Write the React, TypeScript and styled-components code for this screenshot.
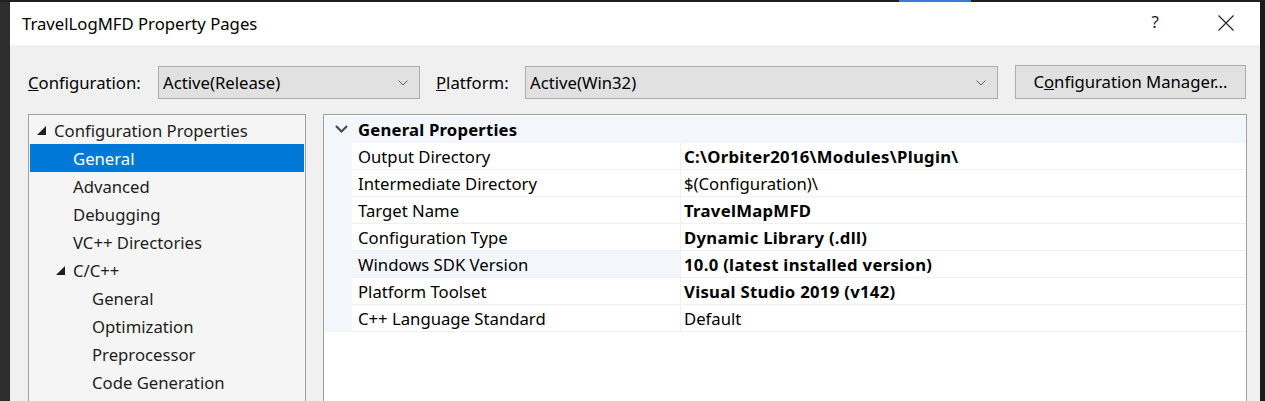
import React from 'react';
import styled, {createGlobalStyle} from "styled-components";

const GlobalStyle = createGlobalStyle`
    html, body {
        margin: 0;
        padding: 0;
        background: #1f1f1f;
        overflow: hidden;
    }
    body {
        font-family: "Segoe UI", "Noto Sans", "Open Sans", sans-serif;
        font-size: 16.7px;
        color: #000;
    }
`

type TreeItem = { label: string, level: number, expanded?: boolean, selected?: boolean }

const treeItems: TreeItem[] = [
    {label: 'Configuration Properties', level: 0, expanded: true},
    {label: 'General', level: 1, selected: true},
    {label: 'Advanced', level: 1},
    {label: 'Debugging', level: 1},
    {label: 'VC++ Directories', level: 1},
    {label: 'C/C++', level: 1, expanded: true},
    {label: 'General', level: 2},
    {label: 'Optimization', level: 2},
    {label: 'Preprocessor', level: 2},
    {label: 'Code Generation', level: 2},
]

type Prop = { name: string, value: string, bold?: boolean, hover?: boolean }

const properties: Prop[] = [
    {name: 'Output Directory', value: 'C:\\Orbiter2016\\Modules\\Plugin\\', bold: true},
    {name: 'Intermediate Directory', value: '$(Configuration)\\'},
    {name: 'Target Name', value: 'TravelMapMFD', bold: true},
    {name: 'Configuration Type', value: 'Dynamic Library (.dll)', bold: true},
    {name: 'Windows SDK Version', value: '10.0 (latest installed version)', bold: true, hover: true},
    {name: 'Platform Toolset', value: 'Visual Studio 2019 (v142)', bold: true},
    {name: 'C++ Language Standard', value: 'Default'},
]

const ComboArrow = () => (
    <svg width="10" height="6" viewBox="0 0 10 6">
        <path d="M0.5 0.5 L5 5 L9.5 0.5" fill="none" stroke="#606060" strokeWidth="1"/>
    </svg>
)

const Expander = () => (
    <svg width="9" height="9" viewBox="0 0 9 9">
        <path d="M9 0 L9 9 L0 9 Z" fill="#1e1e1e"/>
    </svg>
)

export default function App() {
    return (
        <>
            <GlobalStyle/>
            <Screen>
                <TopStrip>
                    <TaskAccent/>
                </TopStrip>
                <Row>
                    <LeftEdge/>
                    <Dialog>
                        <TitleBar>
                            <Title>TravelLogMFD Property Pages</Title>
                            <TitleButtons>
                                <HelpButton>?</HelpButton>
                                <CloseButton>
                                    <svg width="16" height="16" viewBox="0 0 16 16">
                                        <path d="M0.5 0.5 L15.5 15.5 M15.5 0.5 L0.5 15.5" stroke="#1e1e1e"
                                              strokeWidth="1.1"/>
                                    </svg>
                                </CloseButton>
                            </TitleButtons>
                        </TitleBar>
                        <Body>
                            <Toolbar>
                                <FieldLabel width={130}><u>C</u>onfiguration:</FieldLabel>
                                <Combo width={262}>
                                    <span>Active(Release)</span>
                                    <ComboArrow/>
                                </Combo>
                                <FieldLabel gap={16} width={89}><u>P</u>latform:</FieldLabel>
                                <Combo width={473}>
                                    <span>Active(Win32)</span>
                                    <ComboArrow/>
                                </Combo>
                                <ManagerButton>C<u>o</u>nfiguration Manager...</ManagerButton>
                            </Toolbar>
                            <Panels>
                                <TreePanel>
                                    {treeItems.map((item, i) => (
                                        <TreeRow key={i} selected={item.selected}>
                                            <TreeIndent level={item.level}>
                                                {item.expanded && <ExpanderBox><Expander/></ExpanderBox>}
                                            </TreeIndent>
                                            <span>{item.label}</span>
                                        </TreeRow>
                                    ))}
                                </TreePanel>
                                <GridPanel>
                                    <GroupHeader>
                                        <Chevron>
                                            <svg width="13" height="8" viewBox="0 0 13 8">
                                                <path d="M1 1 L6.5 6.5 L12 1" fill="none" stroke="#4a4a4a"
                                                      strokeWidth="2.2"/>
                                            </svg>
                                        </Chevron>
                                        <GroupTitle>General Properties</GroupTitle>
                                    </GroupHeader>
                                    {properties.map((p, i) => (
                                        <PropRow key={i}>
                                            <Gutter/>
                                            <PropName hover={p.hover}>{p.name}</PropName>
                                            <PropValue bold={p.bold}>{p.value}</PropValue>
                                        </PropRow>
                                    ))}
                                </GridPanel>
                            </Panels>
                        </Body>
                    </Dialog>
                    <RightEdge/>
                </Row>
            </Screen>
        </>
    );
}

const Screen = styled.div`
    width: 1265px;
    height: 401px;
    display: flex;
    flex-direction: column;
    overflow: hidden;
`

const TopStrip = styled.div`
    height: 2px;
    flex-shrink: 0;
    background: #1f1f1f;
    display: flex;
`

const TaskAccent = styled.div`
    margin-left: 899px;
    width: 72px;
    background: #3b78d8;
`

const Row = styled.div`
    flex: 1;
    display: flex;
    min-height: 0;
`

const LeftEdge = styled.div`
    width: 10px;
    background: #2d2d2d;
`

const RightEdge = styled.div`
    width: 5px;
    background: #1a1a1a;
`

const Dialog = styled.div`
    width: 1250px;
    display: flex;
    flex-direction: column;
    background: #f0f0f0;
`

const TitleBar = styled.div`
    height: 43px;
    flex-shrink: 0;
    background: #ffffff;
    display: flex;
    align-items: center;
    justify-content: space-between;
    padding-left: 12px;
`

const Title = styled.span`
    color: #000;
    margin-top: -1px;
`

const TitleButtons = styled.div`
    display: flex;
    align-items: center;
    height: 100%;
    margin-right: 26px;
`

const HelpButton = styled.span`
    font-size: 17px;
    color: #1e1e1e;
    margin-right: 59px;
    margin-top: -4px;
`

const CloseButton = styled.span`
    display: flex;
    margin-top: -2px;
`

const Body = styled.div`
    flex: 1;
    display: flex;
    flex-direction: column;
    padding: 19px 13px 0 18px;
`

const Toolbar = styled.div`
    display: flex;
    align-items: center;
    height: 35px;
`

const FieldLabel = styled.span<{ gap?: number, width: number }>`
    margin-left: ${p => p.gap ?? 0}px;
    width: ${p => p.width}px;
    flex-shrink: 0;
    margin-top: 2px;
    white-space: nowrap;
`

const Combo = styled.div<{ width: number }>`
    box-sizing: border-box;
    width: ${p => p.width}px;
    height: 33px;
    margin-top: 2px;
    background: #e1e1e1;
    border: 1px solid #adadad;
    display: flex;
    align-items: center;
    justify-content: space-between;
    padding: 0 11px 0 4px;
`

const ManagerButton = styled.div`
    box-sizing: border-box;
    margin-left: 17px;
    width: 231px;
    height: 34px;
    background: #e1e1e1;
    border: 1px solid #adadad;
    display: flex;
    align-items: center;
    justify-content: center;
    white-space: nowrap;
`

const Panels = styled.div`
    flex: 1;
    display: flex;
    gap: 17px;
    margin-top: 15px;
`

const TreePanel = styled.div`
    box-sizing: border-box;
    width: 278px;
    background: #f5f5f5;
    border: 1px solid #a0a0a0;
    border-bottom: none;
    padding: 1px 1px 0;
`

const TreeRow = styled.div<{ selected?: boolean }>`
    height: 28px;
    display: flex;
    align-items: center;
    background: ${p => p.selected ? '#0078d7' : 'transparent'};
    color: ${p => p.selected ? '#ffffff' : '#1e1e1e'};
    white-space: nowrap;
`

const TreeIndent = styled.div<{ level: number }>`
    width: ${p => 24 + p.level * 19}px;
    flex-shrink: 0;
    display: flex;
    justify-content: flex-end;
`

const ExpanderBox = styled.div`
    width: 17px;
    display: flex;
    align-items: center;
`

const GridPanel = styled.div`
    box-sizing: border-box;
    width: 924px;
    background: #ffffff;
    border: 1px solid #a0a0a0;
    border-bottom: none;
    padding-top: 1px;
`

const GroupHeader = styled.div`
    height: 27px;
    display: flex;
    align-items: center;
    background: #f3f6fb;
`

const Chevron = styled.div`
    width: 34px;
    display: flex;
    justify-content: center;
    margin-top: -1px;
`

const GroupTitle = styled.span`
    font-weight: bold;
    letter-spacing: 0.2px;
`

const PropRow = styled.div`
    height: 27px;
    display: flex;
`

const Gutter = styled.div`
    width: 28px;
    flex-shrink: 0;
    background: #f3f6fb;
`

const Cell = styled.div`
    box-sizing: border-box;
    display: flex;
    align-items: center;
    border-bottom: 1px solid #f0f0f0;
    white-space: nowrap;
`

const PropName = styled(Cell)<{ hover?: boolean }>`
    width: 329px;
    padding-left: 6px;
    background: ${p => p.hover ? '#f3f6fb' : '#ffffff'};
    border-right: 1px solid #f0f0f0;
`

const PropValue = styled(Cell)<{ bold?: boolean }>`
    flex: 1;
    padding-left: 3px;
    font-weight: ${p => p.bold ? 'bold' : 'normal'};
    letter-spacing: ${p => p.bold ? '0.3px' : 'normal'};
`
